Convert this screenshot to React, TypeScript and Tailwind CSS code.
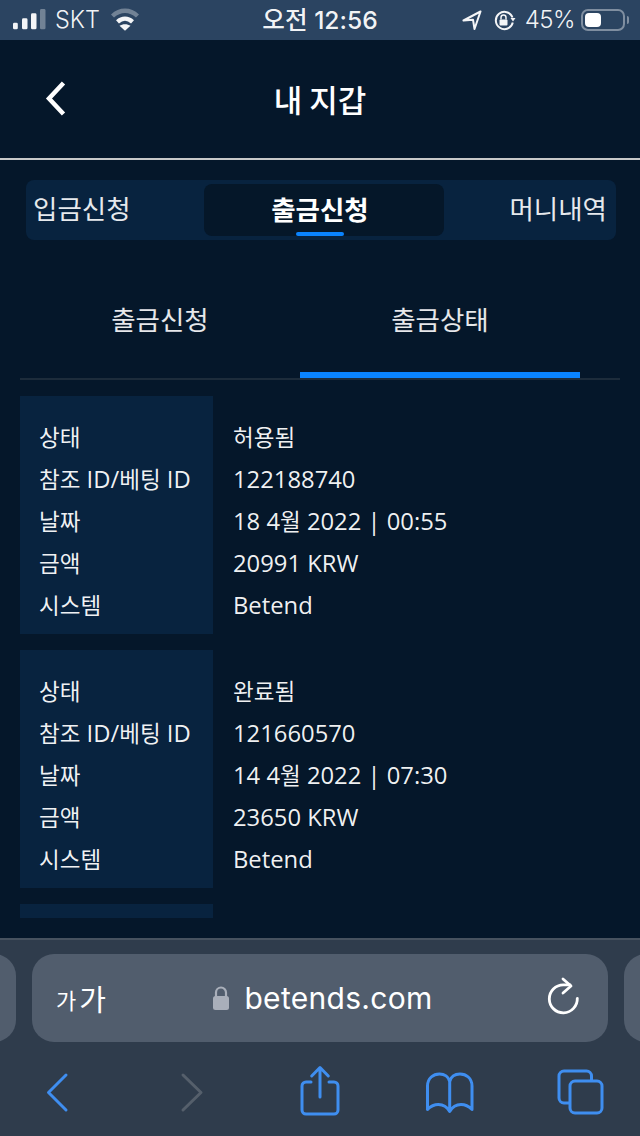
import React from "react";

const kr = "font-['Noto_Sans_CJK_KR',sans-serif]";
const body = "font-['Open_Sans','Noto_Sans_CJK_KR',sans-serif]";
const ui = "font-['Inter','Noto_Sans_CJK_KR',sans-serif]";

type Tx = { status: string; ref: string; date: string; amount: string; system: string };

const txs: Tx[] = [
  { status: "허용됨", ref: "122188740", date: "18 4월 2022 | 00:55", amount: "20991 KRW", system: "Betend" },
  { status: "완료됨", ref: "121660570", date: "14 4월 2022 | 07:30", amount: "23650 KRW", system: "Betend" },
];

const labels = ["상태", "참조 ID/베팅 ID", "날짜", "금액", "시스템"];

// Hangul runs are set a little smaller than the Latin text around them.
function Mixed({ text }: { text: string }) {
  return (
    <div className="h-[42px] whitespace-nowrap">
      {text.split(/([가-힣]+)/).map((part, i) =>
        /[가-힣]/.test(part) ? (
          <span key={i} className="text-[22.5px] leading-none">{part}</span>
        ) : (
          <span key={i}>{part}</span>
        ),
      )}
    </div>
  );
}

function StatusBar() {
  return (
    <div className={`h-10 shrink-0 bg-[#2b4461] flex items-center justify-between pl-[13px] pr-[15px] text-white/95 ${ui}`}>
      <div className="flex items-center w-[200px]">
        <svg width="33" height="24" viewBox="0 0 33 24" fill="currentColor">
          <rect x="0" y="14.700" width="4.800" height="6.600" rx="1.400" />
          <rect x="9" y="10.300" width="5.500" height="11" rx="1.400" />
          <rect x="18" y="5.300" width="5.500" height="16" rx="1.400" />
          <rect x="27" y="1" width="5.500" height="20.300" rx="1.400" opacity="0.35" />
        </svg>
        <span className="ml-[9px] text-[23.5px] leading-none font-light">SKT</span>
        <svg className="ml-[11px]" width="30" height="24" viewBox="0 0 30 24" fill="none" stroke="currentColor" strokeWidth="4.400">
          <path d="M1.500 8C9 1 19 1 26.500 8" opacity="0.35" />
          <path d="M6.500 13.800C11 9.800 17 9.800 21.500 13.800" />
          <path d="M14 22.800l-5.500-5c3-2.200 8-2.200 11 0z" fill="currentColor" stroke="none" />
        </svg>
      </div>
      <div className="text-[24.6px] leading-none font-medium whitespace-nowrap ml-[2px]">오전 12:56</div>
      <div className="flex items-center justify-end w-[200px]">
        <svg width="20" height="20" viewBox="0 0 20 20" fill="none" stroke="currentColor" strokeWidth="2" strokeLinejoin="round">
          <path d="M18.500 1.500L1.500 10.500l9.500-.8 1.500 9.300z" />
        </svg>
        <svg className="ml-[12px]" width="22" height="24" viewBox="0 0 22 24" fill="none" stroke="currentColor" strokeWidth="2">
          <path d="M18.500 9.500a8.600 8.600 0 1 0 .3 5" />
          <path d="M16.500 10h5l-2.500 3.500z" fill="currentColor" stroke="none" />
          <rect x="5.500" y="11.500" width="8" height="6" rx="1" fill="currentColor" stroke="none" />
          <path d="M7 11.500V9.500a2.500 2.500 0 0 1 5 0v2" strokeWidth="1.500" />
        </svg>
        <span className="ml-[9px] text-[24px] leading-none font-light tracking-[-0.5px]">45%</span>
        <div className="ml-[6px] w-[44px] h-[22px] rounded-[7px] border-2 border-white/40 p-[2px] relative">
          <div className="w-[16px] h-full bg-white rounded-[4px]" />
          <div className="absolute right-[-6px] top-[5px] w-[2px] h-[8px] rounded-r bg-white/40" />
        </div>
      </div>
    </div>
  );
}

function WalletHeader() {
  return (
    <div className="h-[120px] shrink-0 border-b-2 border-[#c9c9c9] relative flex items-center justify-center">
      <svg className="absolute left-[44px] top-[40px]" width="22" height="36" viewBox="0 0 22 36" fill="none" stroke="white" strokeWidth="4.500">
        <path d="M19.500 3L5 18.500 19.500 34" />
      </svg>
      <h1 className={`text-white text-[31px] font-medium leading-none mt-[-1px] ${kr}`}>내 지갑</h1>
    </div>
  );
}

function WalletTabs() {
  return (
    <div className={`mt-5 ml-[26px] mr-[24px] h-[60px] rounded-[8px] bg-[#08233f] flex items-center pl-[7px] pr-[9px] text-white text-[26.5px] ${kr}`}>
      <span className="w-[171px] pb-[4px] opacity-90">입금신청</span>
      <div className="relative w-[240px] h-[52px] rounded-[8px] bg-[#051729] flex items-center justify-center font-bold pb-[3px] pr-[8px]">
        출금신청
        <div className="absolute bottom-0 left-[92px] w-[48px] h-1 rounded-[2px] bg-[#0a84ff]" />
      </div>
      <span className="flex-1 text-right pb-[4px] opacity-90">머니내역</span>
    </div>
  );
}

function SubTabs() {
  return (
    <div className={`mt-[40px] mx-5 h-[100px] border-b-2 border-[#1d2c3b] flex text-[26.5px] text-white/90 ${kr}`}>
      <div className="w-[280px] flex items-center justify-center pb-[20px]">출금신청</div>
      <div className="w-[280px] flex items-center justify-center pb-[14px] border-b-[6px] border-[#0a84ff]">출금상태</div>
    </div>
  );
}

function TxCard({ tx }: { tx: Tx }) {
  const values = [tx.status, tx.ref, tx.date, tx.amount, tx.system];
  return (
    <div className={`flex text-[23.8px] leading-[42px] text-white/95 ${body}`}>
      <div className="w-[193px] shrink-0 bg-[#08233f] pl-[19px] pt-[20px] pb-[8px]">
        {labels.map((l) => (
          <Mixed key={l} text={l} />
        ))}
      </div>
      <div className="pl-5 pt-[20px]">
        {values.map((v, i) => (
          <Mixed key={i} text={v} />
        ))}
      </div>
    </div>
  );
}

function BrowserBar() {
  const blue = "#3f8ef0";
  return (
    <div className="absolute inset-x-0 bottom-0 h-[198px] bg-[#2f3c4c] border-t-2 border-[#47525f]">
      <div className="mt-[14px] flex gap-4 mx-[-560px]">
        <div className="w-[576px] h-[88px] rounded-[22px] bg-[#515d6d] shrink-0" />
        <div className="w-[576px] h-[88px] rounded-[22px] bg-[#515d6d] shrink-0 relative flex items-center justify-center text-white">
          <span className={`absolute left-[24px] top-[30px] flex items-center leading-none ${kr}`}>
            <span className="text-[22px]">가</span>
            <span className="text-[29px] ml-[3px]">가</span>
          </span>
          <div className="flex items-center ml-[6px]">
            <svg width="16" height="24" viewBox="0 0 16 24" fill="#a9afba" className="mr-[15px]">
              <rect x="0" y="10" width="16" height="14" rx="2.500" />
              <path d="M3 11V6.500a5 5 0 0 1 10 0V11" fill="none" stroke="#a9afba" strokeWidth="2.200" />
            </svg>
            <span className={`text-[30px] leading-none tracking-[0.3px] ${ui}`}>betends.com</span>
          </div>
          <svg className="absolute right-[23px] top-[18px]" width="40" height="50" viewBox="0 0 40 50" fill="none" stroke="white" strokeWidth="2.800" strokeLinecap="round" strokeLinejoin="round">
            <path d="M32.300 26.300A14 14 0 1 1 18.300 12.800H25" />
            <path d="M18 7l8 7-8 7" />
          </svg>
        </div>
        <div className="w-[576px] h-[88px] rounded-[22px] bg-[#515d6d] shrink-0" />
      </div>
      <div className="absolute left-0 top-[110px]">
        <svg width="640" height="86" viewBox="0 0 640 86" fill="none" strokeWidth="3" strokeLinecap="round" strokeLinejoin="round">
          <path d="M66 25L48.500 42.500 66 60" stroke={blue} strokeWidth="3" />
          <path d="M183 25l18 17.500L183 60" stroke="#555f6b" strokeWidth="3" />
          <g stroke={blue}>
            <path d="M311 32h-5a4 4 0 0 0-4 4v24a4 4 0 0 0 4 4h28a4 4 0 0 0 4-4V36a4 4 0 0 0-4-4h-5" />
            <path d="M320 47V18M311.700 26l8.300-8.500 8.300 8.500" />
            <path d="M427.500 59.500V36c0-8 6-12 12-12 5 0 9 3 10.200 7.500 1.200-4.500 5-7.500 10.300-7.500 6 0 12 4 12 12v23.500c-3-3-7-5-11-5-5 0-9 3-11.300 7-2.300-4-6.300-7-11.300-7-4 0-8 2-11 5zM449.700 31v30" />
            <rect x="570" y="31" width="32" height="32" rx="5" />
            <path d="M569 53h-5a5 5 0 0 1-5-5V26a5 5 0 0 1 5-5h22.500a5 5 0 0 1 5 5v4.500" />
          </g>
        </svg>
      </div>
    </div>
  );
}

export default function App() {
  return (
    <div className="relative w-[640px] h-[1136px] overflow-hidden bg-[#05172a] flex flex-col">
      <StatusBar />
      <WalletHeader />
      <WalletTabs />
      <SubTabs />
      <div className="mt-4 mx-5 flex flex-col gap-4">
        {txs.map((t) => (
          <TxCard key={t.ref} tx={t} />
        ))}
        <div className="w-[193px] h-[14px] bg-[#08233f]" />
      </div>
      <BrowserBar />
    </div>
  );
}
